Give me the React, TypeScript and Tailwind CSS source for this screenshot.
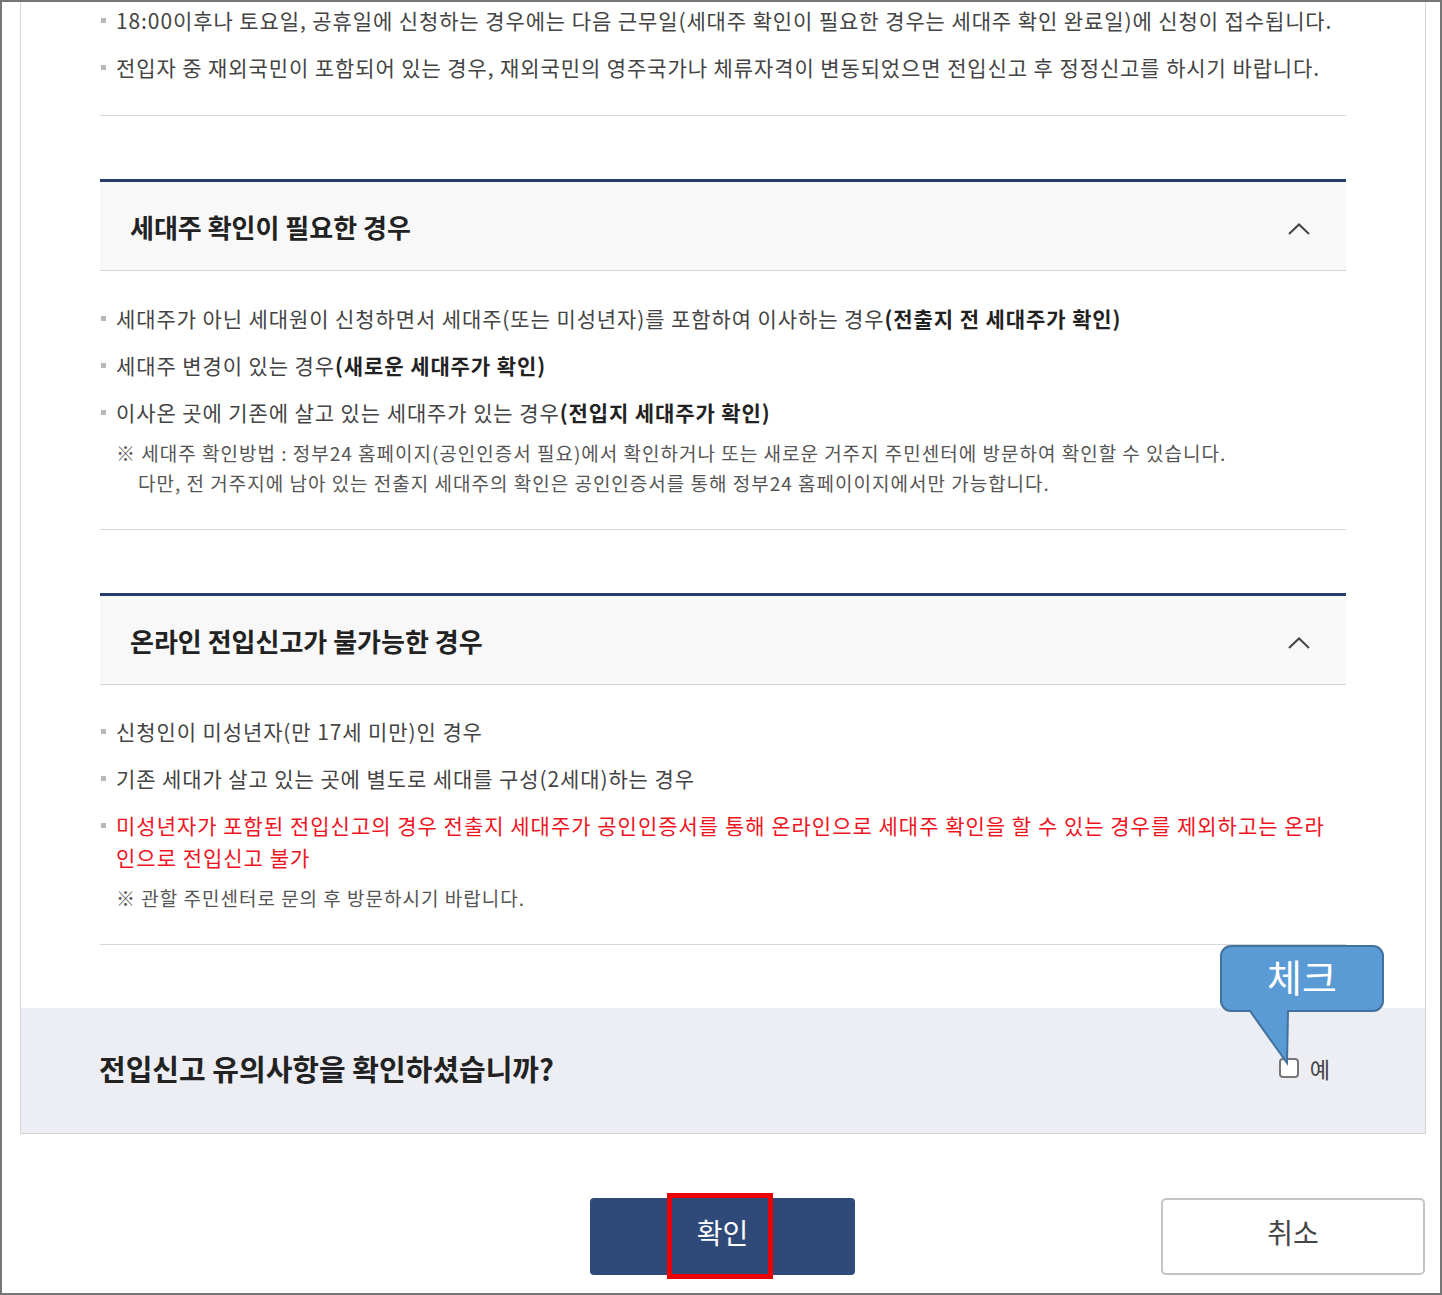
import React from "react";

const font = { fontFamily: '"Noto Sans CJK KR", "Noto Sans", sans-serif' };

function Bullet({ children, red }: { children: React.ReactNode; red?: boolean }) {
  return (
    <li className={`flex items-center h-[47px] text-[21px] tracking-[0.9px] ${red ? "text-[#f0141e]" : "text-[#444]"}`}>
      <span className="w-[5px] h-[5px] bg-[#b8b8b8] ml-[1px] mr-[10px] shrink-0" />
      <span className="whitespace-nowrap">{children}</span>
    </li>
  );
}

function SectionHeader({ title }: { title: string }) {
  return (
    <div className="border-t-[3px] border-[#263c69] border-b border-b-[#d6d6d6] bg-[#f8f8f8] h-[92px] pt-[1px] flex items-center justify-between pl-[30px] pr-[36px]">
      <h2 className="text-[26px] font-bold text-[#222]">{title}</h2>
      <svg width="22" height="12" viewBox="0 0 22 12" fill="none" className="mt-[4px]">
        <path d="M1 11 L11 1.5 L21 11" stroke="#444" strokeWidth="2" />
      </svg>
    </div>
  );
}

export default function App() {
  return (
    <div style={font} className="w-[1442px] h-[1295px] border-2 border-[#767676] bg-white relative overflow-hidden">
      <div className="ml-[18px] w-[1406px] border-x border-b border-[#d4d4d4]">
        <div className="px-[79px]">
          <ul className="-mt-[5px]">
            <Bullet>18:00이후나 토요일, 공휴일에 신청하는 경우에는 다음 근무일(세대주 확인이 필요한 경우는 세대주 확인 완료일)에 신청이 접수됩니다.</Bullet>
            <Bullet>전입자 중 재외국민이 포함되어 있는 경우, 재외국민의 영주국가나 체류자격이 변동되었으면 전입신고 후 정정신고를 하시기 바랍니다.</Bullet>
          </ul>
          <div className="mt-[24px] border-t border-[#d6d6d6]" />

          <div className="mt-[63px]">
            <SectionHeader title="세대주 확인이 필요한 경우" />
            <ul className="mt-[24px]">
              <Bullet>
                세대주가 아닌 세대원이 신청하면서 세대주(또는 미성년자)를 포함하여 이사하는 경우
                <b className="text-[#222]">(전출지 전 세대주가 확인)</b>
              </Bullet>
              <Bullet>
                세대주 변경이 있는 경우<b className="text-[#222]">(새로운 세대주가 확인)</b>
              </Bullet>
              <Bullet>
                이사온 곳에 기존에 살고 있는 세대주가 있는 경우<b className="text-[#222]">(전입지 세대주가 확인)</b>
              </Bullet>
            </ul>
            <div className="mt-[2px] pl-[16px] text-[19px] tracking-[1px] leading-[30px] text-[#555] whitespace-nowrap">
              <p>※ 세대주 확인방법 : 정부24 홈페이지(공인인증서 필요)에서 확인하거나 또는 새로운 거주지 주민센터에 방문하여 확인할 수 있습니다.</p>
              <p className="pl-[22px]">다만, 전 거주지에 남아 있는 전출지 세대주의 확인은 공인인증서를 통해 정부24 홈페이이지에서만 가능합니다.</p>
            </div>
            <div className="mt-[31px] border-t border-[#d6d6d6]" />
          </div>

          <div className="mt-[63px]">
            <SectionHeader title="온라인 전입신고가 불가능한 경우" />
            <ul className="mt-[23px]">
              <Bullet>신청인이 미성년자(만 17세 미만)인 경우</Bullet>
              <Bullet>기존 세대가 살고 있는 곳에 별도로 세대를 구성(2세대)하는 경우</Bullet>
              <li className="flex items-start pt-[7px] pb-[10px] text-[21px] tracking-[1px] leading-[32px] text-[#f0141e]">
                <span className="w-[5px] h-[5px] bg-[#b8b8b8] ml-[1px] mr-[10px] mt-[14px] shrink-0" />
                <span className="whitespace-nowrap">
                  미성년자가 포함된 전입신고의 경우 전출지 세대주가 공인인증서를 통해 온라인으로 세대주 확인을 할 수 있는 경우를 제외하고는 온라
                  <br />
                  인으로 전입신고 불가
                </span>
              </li>
            </ul>
            <p className="pl-[16px] text-[19px] tracking-[1px] leading-[30px] text-[#555]">※ 관할 주민센터로 문의 후 방문하시기 바랍니다.</p>
            <div className="mt-[31px] border-t border-[#d6d6d6]" />
          </div>
        </div>

        <div className="mt-[63px] h-[125px] pb-[4px] bg-[#eceef3] flex items-center justify-between pl-[78px] pr-[95px]">
          <p className="text-[29px] font-semibold text-[#222]">전입신고 유의사항을 확인하셨습니까?</p>
          <label className="flex items-center gap-[11px] text-[22px] text-[#444]">
            <span className="w-[20px] h-[20px] -mt-[2px] bg-white border-2 border-[#777] rounded-[4px]" />
            예
          </label>
        </div>
      </div>

      <div className="mt-[64px] flex pl-[588px]">
        <button className="relative w-[265px] h-[77px] pb-[9px] bg-[#2f4a78] rounded-[4px] text-white text-[28px]">
          확인
          <span className="absolute left-[77px] top-[-5px] w-[106px] h-[86px] border-[5px] border-[#ee0000]" />
        </button>
        <button className="ml-[306px] w-[264px] h-[77px] pb-[9px] bg-white border-2 border-[#c4c4c4] rounded-[5px] text-[#444] text-[28px]">
          취소
        </button>
      </div>

      <div className="absolute left-[1216px] top-[941px] w-[170px] h-[125px]">
        <svg width="170" height="125" viewBox="0 0 170 125">
          <path
            d="M13 3 H155 A10 10 0 0 1 165 13 V58 A10 10 0 0 1 155 68 H70 L69 120 L32 68 H13 A10 10 0 0 1 3 58 V13 A10 10 0 0 1 13 3 Z"
            fill="#5b9bd5"
            stroke="#41719c"
            strokeWidth="2"
          />
        </svg>
        <span className="absolute left-[3px] top-[0px] w-[162px] h-[65px] flex items-center justify-center text-white text-[38px] leading-none">
          체크
        </span>
      </div>
    </div>
  );
}
